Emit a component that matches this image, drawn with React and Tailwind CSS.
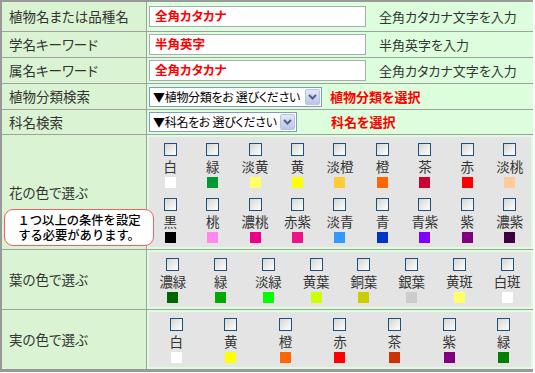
import React from 'react';

const flowerColors = [
  ['白', 'bg-[#ffffff]'], ['緑', 'bg-[#009933]'], ['淡黄', 'bg-[#ffff66]'],
  ['黄', 'bg-[#ffff00]'], ['淡橙', 'bg-[#ffcc33]'], ['橙', 'bg-[#ff6600]'],
  ['茶', 'bg-[#cc0033]'], ['赤', 'bg-[#ff0000]'], ['淡桃', 'bg-[#ffcc99]'],
  ['黒', 'bg-[#000000]'], ['桃', 'bg-[#ff88f0]'], ['濃桃', 'bg-[#ee0088]'],
  ['赤紫', 'bg-[#ee1188]'], ['淡青', 'bg-[#3399ff]'], ['青', 'bg-[#0033cc]'],
  ['青紫', 'bg-[#8000ff]'], ['紫', 'bg-[#800080]'], ['濃紫', 'bg-[#400040]'],
];

const leafColors = [
  ['濃緑', 'bg-[#006600]'], ['緑', 'bg-[#00aa00]'], ['淡緑', 'bg-[#00ff00]'],
  ['黄葉', 'bg-[#ccff00]'], ['銅葉', 'bg-[#cccc00]'], ['銀葉', 'bg-[#cccccc]'],
  ['黄斑', 'bg-[#ffff66]'], ['白斑', 'bg-[#ffffff]'],
];

const fruitColors = [
  ['白', 'bg-[#ffffff]'], ['黄', 'bg-[#ffff00]'], ['橙', 'bg-[#ff6600]'],
  ['赤', 'bg-[#ff0000]'], ['茶', 'bg-[#cc3300]'], ['紫', 'bg-[#800080]'],
  ['緑', 'bg-[#008000]'],
];

const Label = ({ children }) => (
  <div className="w-[145px] shrink-0 bg-[#daf3d2] border-r border-[#a0a0a0] flex items-center pl-[7px] text-[13.5px] text-[#333]">
    {children}
  </div>
);

const TextBox = ({ placeholder, hint }) => (
  <div className="flex-1 bg-[#dcfedc] flex items-center pl-[2px]">
    <div className="w-[217px] h-[21px] border border-[#a5acb2] bg-white flex items-center pl-[5px] text-[12.5px] font-bold text-[#ff0000]">
      {placeholder}
    </div>
    <span className="ml-[13px] text-[13px] text-[#333]">{hint}</span>
  </div>
);

const SelectBox = ({ text, width, note, gap }) => (
  <div className="flex-1 bg-[#dcfedc] flex items-center pl-[2px]">
    <div className={`${width} h-[20px] border border-[#7f9db9] bg-white flex items-center`}>
      <span className="flex-1 pl-[3px] text-[12px] tracking-[-0.3px] text-black whitespace-nowrap overflow-hidden">{text}</span>
      <span className="w-[15px] h-[16px] mr-px rounded-[2px] border border-[#b5c3e5] bg-linear-to-b from-[#e3e8f6] to-[#b9c6e8] flex items-center justify-center">
        <svg width="9" height="6" viewBox="0 0 9 6">
          <path d="M1 1 L4.5 4.5 L8 1" fill="none" stroke="#4d6185" strokeWidth="2" />
        </svg>
      </span>
    </div>
    <span className={`${gap} text-[13px] font-bold text-[#ff0000]`}>{note}</span>
  </div>
);

const ColorGrid = ({ items, cols }) => (
  <div className="flex-1 bg-[#dcfedc] p-[2px] flex">
    <div className={`flex-1 bg-[#e4e4e4] grid ${cols} gap-y-[10px] pt-[6px] pb-[4px]`}>
      {items.map(([name, color], i) => (
        <div key={i} className="flex flex-col items-center">
          <span className="w-[13px] h-[13px] border border-[#1c5180] bg-linear-to-br from-[#d6d6d0] to-white" />
          <span className="text-[13.5px] leading-[20px] text-[#333]">{name}</span>
          <span className={`w-[11px] h-[11px] mt-px ${color}`} />
        </div>
      ))}
    </div>
  </div>
);

const App = () => {
  return (
    <div className="w-[535px] h-[373px] bg-white font-['Noto_Sans_CJK_JP',sans-serif] [font-feature-settings:'palt']">
      <div className="relative w-[533px] border-t-2 border-l-2 border-b-[3px] border-[#999]">
        {/* text search rows */}
        <div className="flex h-[30px] border-b border-[#a0a0a0]">
          <Label>植物名または品種名</Label>
          <TextBox placeholder="全角カタカナ" hint="全角カタカナ文字を入力" />
        </div>
        <div className="flex h-[26px] border-b border-[#a0a0a0]">
          <Label>学名キーワード</Label>
          <TextBox placeholder="半角英字" hint="半角英字を入力" />
        </div>
        <div className="flex h-[26px] border-b border-[#a0a0a0]">
          <Label>属名キーワード</Label>
          <TextBox placeholder="全角カタカナ" hint="全角カタカナ文字を入力" />
        </div>

        {/* select rows */}
        <div className="flex h-[26px] border-b border-[#a0a0a0]">
          <Label>植物分類検索</Label>
          <SelectBox text="▼植物分類をお 選びください" width="w-[173px]" note="植物分類を選択" gap="ml-[8px]" />
        </div>
        <div className="flex h-[25px] border-b border-[#a0a0a0]">
          <Label>科名検索</Label>
          <SelectBox text="▼科名をお 選びください" width="w-[148px]" note="科名を選択" gap="ml-[34px]" />
        </div>

        {/* colour rows */}
        <div className="relative flex border-b border-[#a0a0a0]">
          <Label>花の色で選ぶ</Label>
          <ColorGrid items={flowerColors} cols="grid-cols-9" />
          <div className="absolute left-[2px] top-[74px] z-10 w-[150px] h-[37px] rounded-[9px] border border-[#f06060] bg-white flex flex-col items-center justify-center text-[12.3px] leading-[15px] font-medium text-black [font-feature-settings:normal]">
            <span>１つ以上の条件を設定</span>
            <span>する必要があります。</span>
          </div>
        </div>
        <div className="flex border-b border-[#a0a0a0]">
          <Label>葉の色で選ぶ</Label>
          <ColorGrid items={leafColors} cols="grid-cols-8" />
        </div>
        <div className="flex">
          <Label>実の色で選ぶ</Label>
          <ColorGrid items={fruitColors} cols="grid-cols-7" />
        </div>
      </div>
    </div>
  );
};

export default App;
